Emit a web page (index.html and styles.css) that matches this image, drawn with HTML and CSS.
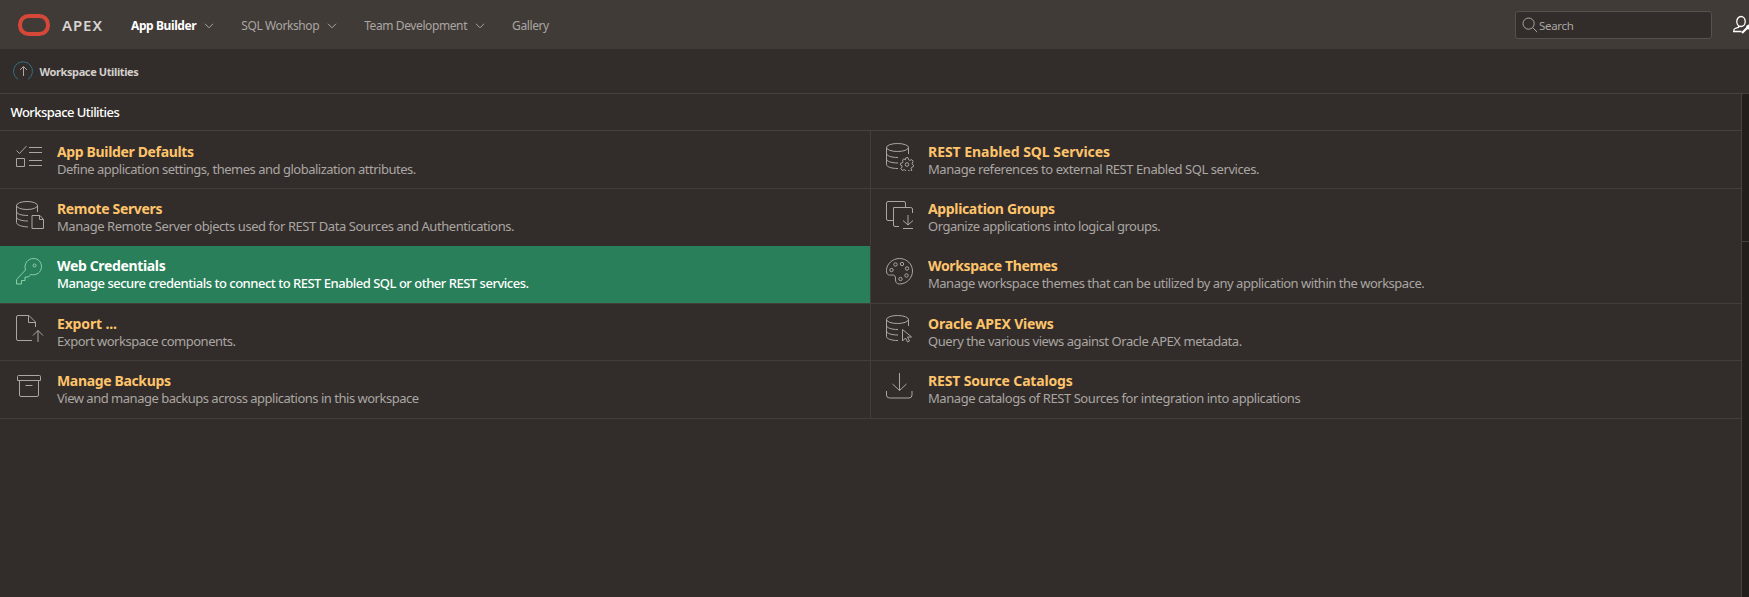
FILE: index.html
```html
<!DOCTYPE html>
<html lang="en">
<head>
<meta charset="utf-8">
<title>Workspace Utilities</title>
<link rel="stylesheet" href="styles.css">
</head>
<body>
<header class="header">
  <a class="brand"><svg class="logo" width="32" height="22" viewBox="0 0 32 22"><rect x="2" y="2" width="28" height="18" rx="8.5"/></svg><span class="brand-name">APEX</span></a>
  <nav class="nav">
    <a class="nav-item current"><span>App Builder</span><svg class="chevron" width="10" height="6" viewBox="0 0 10 6"><path d="M1 .8 5 4.800 9 .8"/></svg></a>
    <a class="nav-item"><span>SQL Workshop</span><svg class="chevron" width="10" height="6" viewBox="0 0 10 6"><path d="M1 .8 5 4.800 9 .8"/></svg></a>
    <a class="nav-item"><span>Team Development</span><svg class="chevron" width="10" height="6" viewBox="0 0 10 6"><path d="M1 .8 5 4.800 9 .8"/></svg></a>
    <a class="nav-item"><span>Gallery</span></a>
  </nav>
  <div class="search"><svg width="16" height="16" viewBox="0 0 16 16"><circle cx="6.600" cy="6.600" r="5.600"/><path d="m10.600 10.600 4.600 4.400"/></svg><span>Search</span></div>
  <svg class="admin" width="16" height="20" viewBox="0 0 16 20"><ellipse cx="8" cy="6.500" rx="4.200" ry="5"/><path d="M5.700 11v1.200L2 13.500C.9 14 .7 15 .7 16.500H8.500"/><path class="wrench" d="m9 18 4.500-4.500"/><path class="wrench-head" d="M13 14c-.6-2.500.7-4.300 3-4.500v5z"/></svg>
</header>
<div class="breadcrumb"><svg width="20" height="20" viewBox="0 0 20 20"><path class="ring" d="M5 18.300A9.500 9.500 0 1 1 15 18.300"/><path d="M10.500 15V6M7 9l3.500-3.500L14 9"/></svg><span>Workspace Utilities</span></div>
<div class="body">
  <main class="main">
    <h1 class="region-title"><span>Workspace Utilities</span></h1>
    <div class="grid">
      <a class="item first"><svg class="icon" viewBox="0 0 28 28"><path d="m.5 7.500 3 3L10.500 3M.5 15.500h8v8h-8zM13 4.500h13M13 9.500h13M13 17.500h13M13 22.500h13"/></svg><div><h2 class="snug">App Builder Defaults</h2><p class="tight">Define application settings, themes and globalization attributes.</p></div></a>
      <a class="item first"><svg class="icon" viewBox="0 0 28 28"><ellipse cx="11.500" cy="4.500" rx="11" ry="4"/><path d="M.5 4.500v17c0 2 4 4 11.500 4M22.500 4.500V11M.5 10.500c0 2 4 4 11.500 4M.5 16c0 2 4 4 11.500 4"/><path d="M19.900 14.700h2.200l.5 2.100 1.200.6 2-.8 1.500 1.700-1.200 1.800.2 1.400 1.400.8v1.200l-2 .8-.6 1.200.8 1.800-1.700 1.100-1.800-1-.3 1.400h-2.200l-.5-1.600-1.200-.5-1.900.7-1.400-1.700 1.200-1.700-.2-1.300-1.600-.8.3-1.700 1.900-.3.500-1.200-.6-1.700 1.500-1.100 1.500 1z"/><circle cx="21" cy="21.500" r="1.800"/></svg><div><h2 class="even">REST Enabled SQL Services</h2><p>Manage references to external REST Enabled SQL services.</p></div></a>
      <a class="item plain"><svg class="icon" viewBox="0 0 28 28"><ellipse cx="11" cy="4.500" rx="10.500" ry="4"/><path d="M.5 4.500v17c0 2 3.500 4 11.500 4.500M21.500 4.500V11M.5 10.500c0 2 4 4 11.500 4M.5 16c0 2 4 4 11.500 4M16 14.500h8l3.500 4v9H16zM23.500 14.500v4h4"/></svg><div><h2 class="snug">Remote Servers</h2><p>Manage Remote Server objects used for REST Data Sources and Authentications.</p></div></a>
      <a class="item plain"><svg class="icon" viewBox="0 0 28 28"><path d="M7 19.500H2Q.5 19.500.5 18V2Q.5.500 2 .500h16q1.500 0 1.500 1.500v4M13 25.500H9q-1.500 0-1.500-1.500V6.500h17q2 0 2 1.500v4M22 14v10m-5-4.500 5 4.500 5-4.500M17 27.500h10"/></svg><div><h2 class="snug">Application Groups</h2><p class="tight">Organize applications into logical groups.</p></div></a>
      <a class="item selected"><svg class="icon" viewBox="0 0 28 28"><path d="M9.500 12C7.500 5.500 12 .5 17.500.5c4.500 0 8 3.500 8 8 0 5.500-5 9.500-11 8l-2 2.500H9v3.500H5.500V26h-5v-4.500z"/><circle cx="18.500" cy="7.500" r="1.500"/></svg><div><h2 class="snug">Web Credentials</h2><p class="tight">Manage secure credentials to connect to REST Enabled SQL or other REST services.</p></div></a>
      <a class="item"><svg class="icon" viewBox="0 0 28 28"><path d="M13.500.5C6.500.5.5 6 .5 12.500c0 4.500 2 4.800 5 4.500 3-.3 4.200 1 4 4-.2 3 1 5 4 5 7.200 0 13-6 13-13S20.700.5 13.500.5z"/><circle cx="9.500" cy="6.500" r="1.700"/><circle cx="16" cy="6" r="1.700"/><circle cx="21" cy="10.500" r="1.700"/><circle cx="5.500" cy="12" r="1.700"/><circle cx="20.500" cy="17.500" r="1.700"/><circle cx="14.500" cy="21" r="1.700"/></svg><div><h2 class="snug">Workspace Themes</h2><p class="tight">Manage workspace themes that can be utilized by any application within the workspace.</p></div></a>
      <a class="item raised"><svg class="icon" viewBox="0 0 28 28"><path d="M16 25.500H2A1.500 1.500 0 0 1 .5 24V2A1.500 1.500 0 0 1 2 .5h11l6.500 6.500v5M12.500.5v7h7M22 27V15.500M17 20.500l5-5 5 5"/></svg><div><h2 class="loose">Export ...</h2><p class="tight">Export workspace components.</p></div></a>
      <a class="item raised"><svg class="icon" viewBox="0 0 28 28"><ellipse cx="11.500" cy="4.500" rx="11" ry="4"/><path d="M.5 4.500v17c0 2 4 4 11.500 4M22.500 4.500V11M.5 10.500c0 2 4 4 11.500 4M.5 16c0 2 4 4 11.500 4M16.500 14.500V26l3-3 2 4 2-1-2-4h4z"/></svg><div><h2 class="loose">Oracle APEX Views</h2><p>Query the various views against Oracle APEX metadata.</p></div></a>
      <a class="item"><svg class="icon" viewBox="0 0 28 28"><path d="M2.500 2.500h21q1 0 1 1v4h-23v-4q0-1 1-1zM3.500 7.500V22q0 1.500 1.500 1.500h16q1.500 0 1.500-1.500V7.500M9.500 12.500h7"/></svg><div><h2 class="snug">Manage Backups</h2><p class="tight">View and manage backups across applications in this workspace</p></div></a>
      <a class="item"><svg class="icon" viewBox="0 0 28 28"><path d="M13.500 0v17.500M6.500 11l7 6.500 7-6.500M.5 18v4q0 3 3 3h19.500q3 0 3-3v-4"/></svg><div><h2 class="loose">REST Source Catalogs</h2><p>Manage catalogs of REST Sources for integration into applications</p></div></a>
    </div>
  </main>
  <aside class="side"><div class="side-top"></div></aside>
</div>
</body>
</html>
```
FILE: styles.css
```css
* { box-sizing: border-box; }
body { margin: 0; width: 1749px; height: 597px; overflow: hidden; display: flex; flex-direction: column; background: #322d2a; color: #aaa6a3; font-family: "Noto Sans", sans-serif; }
svg { fill: none; stroke: #aaa6a3; flex: none; }
h1, h2, p { margin: 0; white-space: nowrap; }
.header { height: 49px; flex: none; display: flex; align-items: center; background: #413b37; padding-left: 18px; padding-top: 1px; }
.brand { display: flex; align-items: center; width: 113px; gap: 12px; }
.logo { stroke: #d54739; stroke-width: 4; }
.brand-name { font-size: 15px; font-weight: 600; letter-spacing: .9px; color: #d7d4d1; }
.nav { display: flex; flex: 1; }
.nav-item { display: flex; align-items: center; gap: 8px; margin-right: 27px; padding-top: 1px; font-size: 12px; white-space: nowrap; letter-spacing: -.4px; }
.nav-item.current { color: #fff; font-weight: 700; }
.search { width: 197px; height: 28px; display: flex; align-items: center; gap: 1px; padding-left: 6px; border: 1px solid #57514d; border-radius: 3px; background: #322d2a; font-size: 11.500px; letter-spacing: -.3px; }
.admin { margin-left: 21px; width: 16px; stroke: #fff; stroke-width: 1.300; }
.admin .wrench { stroke-width: 2.200; }
.admin .wrench-head { fill: #fff; stroke: none; }
.breadcrumb { height: 45px; flex: none; display: flex; align-items: center; gap: 6.500px; padding: 0 0 0 13px; border-bottom: 1px solid #47413d; font-size: 11px; font-weight: 700; color: #d3cfcc; letter-spacing: -.39px; }
.breadcrumb .ring { stroke: #326f80; }
.body { display: flex; flex: 1; }
.main { width: 1741px; }
.region-title { height: 37px; line-height: 36px; padding-left: 10.500px; border-bottom: 1px solid #47413d; font-size: 13px; font-weight: 500; color: #fff; letter-spacing: -.55px; }
.grid { display: grid; grid-template-columns: 870px 871px; grid-template-rows: 58px 57px 58px 57px 58px; }
.item { display: flex; gap: 13px; padding: 12px 0 0 16px; border-bottom: 1px solid #443e3a; }
.item:nth-child(even) { border-left: 1px solid #443e3a; padding-left: 15px; gap: 14px; }
.item.plain { border-bottom-color: transparent; }
.item.selected { background: #287f59; background-clip: padding-box; }
.icon { width: 28px; height: 28px; }
.item h2 { font-size: 14px; line-height: 17px; font-weight: 700; color: #ffc46b; margin-top: -1px; }
.item.raised { padding-top: 11px; }
.item.first h2, .item.raised h2 { margin-top: 0; }
.item p { font-size: 13px; line-height: 17px; margin-top: 1px; letter-spacing: -.44px; }
.item p.tight { letter-spacing: -.49px; }
.item h2.even { letter-spacing: -.04px; }
.item h2.loose { letter-spacing: -.16px; }
.item h2.snug { letter-spacing: -.35px; }
.selected h2, .selected p { color: #fff; }
.selected p { font-weight: 500; }
.selected svg { stroke: #8dd0a8; }
.side { flex: 1; border-left: 1px solid #47413d; background: #211e1b; }
.side-top { height: 148px; border-bottom: 1px solid #47413d; }
```
